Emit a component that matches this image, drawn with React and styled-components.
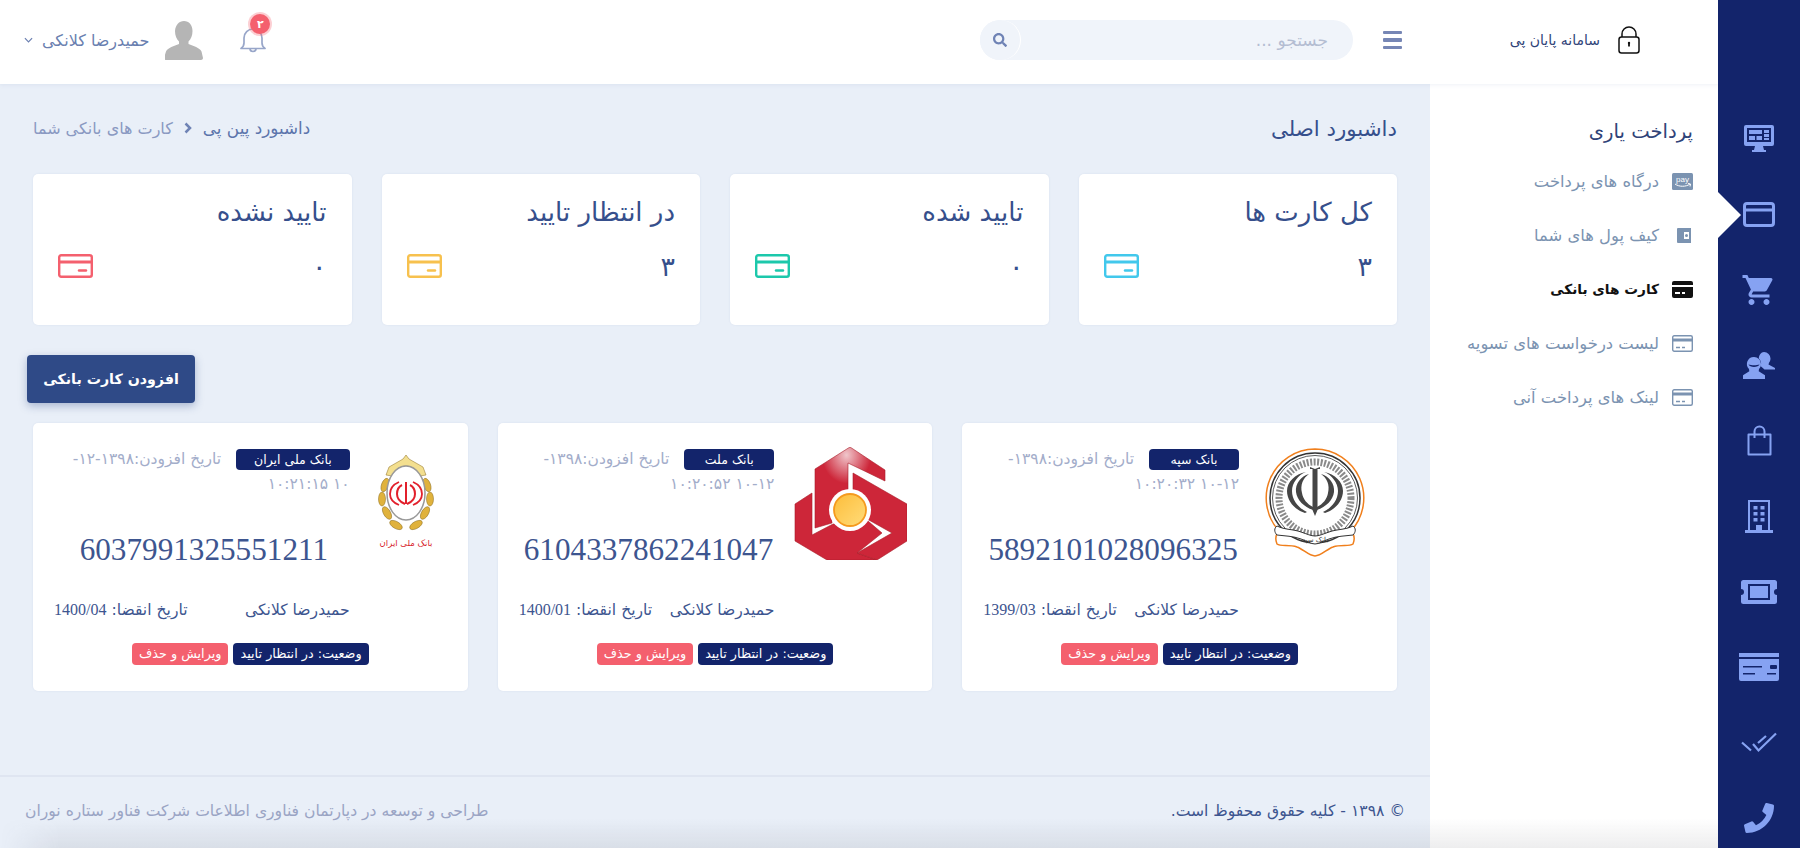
import React from "react";
import styled, { createGlobalStyle } from "styled-components";
import { FaPhoneAlt, FaSearch } from "react-icons/fa";
import { MdShoppingCart } from "react-icons/md";

const GlobalStyle = createGlobalStyle`
  * { box-sizing: border-box; }
  html, body { margin: 0; padding: 0; height: 100%; background: #e9eff8; }
  body { font-family: "DejaVu Sans", sans-serif; overflow: hidden; }
`;

const stats = [
  { title: "کل کارت ها", value: "۳", color: "#42c8ec" },
  { title: "تایید شده", value: "۰", color: "#1cc8ab" },
  { title: "در انتظار تایید", value: "۳", color: "#f7c14e" },
  { title: "تایید نشده", value: "۰", color: "#f4606e" },
];

// the zero width spaces let the date wrap after a hyphen, as in the reference
const banks = [
  { name: "بانک سپه", date: "۱۳۹۸-\u200b۱۲-۱۰ ۱۰:۲۰:۳۲", number: "5892101028096325", expiry: "1399/03", logo: "sepah", logoWidth: 137 },
  { name: "بانک ملت", date: "۱۳۹۸-\u200b۱۲-۱۰ ۱۰:۲۰:۵۲", number: "6104337862241047", expiry: "1400/01", logo: "mellat", logoWidth: 137 },
  { name: "بانک ملی ایران", date: "۱۳۹۸-۱۲-\u200b۱۰ ۱۰:۲۱:۱۵", number: "6037991325551211", expiry: "1400/04", logo: "melli", logoWidth: 97 },
];

const menu = [
  { label: "درگاه های پرداخت", icon: "pay" },
  { label: "کیف پول های شما", icon: "wallet" },
  { label: "کارت های بانکی", icon: "bank", active: true },
  { label: "لیست درخواست های تسویه", icon: "list" },
  { label: "لینک های پرداخت آنی", icon: "list" },
];

/* rail icons */
const MonitorIcon = () => (
  <svg width="30" height="27" viewBox="0 0 30 27" fill="currentColor">
    <path fillRule="evenodd" d="M2 0h26a2 2 0 0 1 2 2v17a2 2 0 0 1-2 2H19l1 4h2v2H8v-2h2l1-4H2a2 2 0 0 1-2-2V2a2 2 0 0 1 2-2zm1 3v14h24V3H3z" />
    <path d="M5 5h13v4H5zM20 5h5v3h-5zM20 9h5v3h-5zM5 11h6v4H5zM12.500 11h5.500v4h-5.500zM20 13h5v2h-5z" />
  </svg>
);
const CardOutlineIcon = () => (
  <svg width="32" height="25" viewBox="0 0 32 25" fill="none" stroke="currentColor" strokeWidth="3">
    <rect x="1.500" y="1.500" width="29" height="22" rx="2.500" />
    <path d="M1 8h30" strokeWidth="3" />
  </svg>
);
const PeopleIcon = () => (
  <svg width="32" height="27" viewBox="0 0 32 27" fill="currentColor">
    <path d="M21 0a6.500 6.500 0 0 1 6.500 6.500c0 1.500-.5 3-1.500 4.200l-.5 1.800 6.500 3.500v1.500H21.500l-4-3.500c.3-.8.6-1.600.6-2.500 0-2-1-3.700-2.300-4.900C16 3 18 0 21 0z" />
    <path fillRule="evenodd" d="M11 5a7 7 0 0 1 7 7c0 2-.7 3.700-2 5l-.3 2.200 6.300 4V27H0v-3.800l6.300-4L6 17a7 7 0 0 1 5-12zM5.500 12.500c1 3.200 10 3.200 11 0-3 1-8 1-11 0z" />
  </svg>
);
const BagIcon = () => (
  <svg width="25" height="31" viewBox="0 0 25 31" fill="none" stroke="currentColor" strokeWidth="2">
    <path d="M1.500 9.500h22V29.500h-22z" strokeLinejoin="round" />
    <path d="M7.500 13V6.500a5 5 0 0 1 10 0V13" />
  </svg>
);
const BuildingIcon = () => (
  <svg width="28" height="33" viewBox="0 0 28 33" fill="currentColor">
    <path fillRule="evenodd" d="M3 0h22v30h3v3H0v-3h3V0zm2 2v28h6v-5h6v5h6V2H5z" />
    <path d="M8.500 6h4v3.500h-4zM15.500 6h4v3.500h-4zM8.500 12h4v3.500h-4zM15.500 12h4v3.500h-4zM8.500 18h4v3.500h-4zM15.500 18h4v3.500h-4z" />
  </svg>
);
const TicketIcon = () => (
  <svg width="36" height="24" viewBox="0 0 36 24" fill="currentColor">
    <path fillRule="evenodd" d="M2.500 0h31A2.500 2.500 0 0 1 36 2.500V9a3 3 0 0 0 0 6v6.500a2.500 2.500 0 0 1-2.500 2.500h-31A2.500 2.500 0 0 1 0 21.500V15a3 3 0 0 0 0-6V2.500A2.500 2.500 0 0 1 2.500 0zM7 4v16h22V4H7z" />
    <path d="M9 6h18v12H9z" />
  </svg>
);
const CardFilledIcon = () => (
  <svg width="40" height="28" viewBox="0 0 40 28" fill="currentColor">
    <path d="M0 0h40v4H0z" />
    <path fillRule="evenodd" d="M0 6h40v20a2 2 0 0 1-2 2H2a2 2 0 0 1-2-2V6zm4 7v1.500h19V13H4zm0 7v1.500h12V20H4zm28-8a1 1 0 0 0-1 1v2a1 1 0 0 0 1 1h5a1 1 0 0 0 1-1v-2a1 1 0 0 0-1-1h-5zm-4 8v1.500h9V20h-9z" />
  </svg>
);
const CheckIcon = () => (
  <svg width="36" height="21" viewBox="0 0 36 21" fill="none" stroke="currentColor" strokeWidth="2.200">
    <path d="M1 10.500l9 8M12 12l5.500 6.500L35 1.500M17 11l8-7" />
  </svg>
);
const PhoneIcon = styled(FaPhoneAlt)`
  transform: scaleX(-1);
`;

const railIcons = [
  { El: MonitorIcon },
  { El: CardOutlineIcon, active: true },
  { El: () => <MdShoppingCart size={36} /> },
  { El: PeopleIcon },
  { El: BagIcon },
  { El: BuildingIcon },
  { El: TicketIcon },
  { El: CardFilledIcon },
  { El: CheckIcon },
  { El: () => <PhoneIcon size={30} /> },
];

const StatCardIcon = ({ color }) => (
  <svg width="35" height="24" viewBox="0 0 35 24" fill="none" stroke={color} strokeWidth="2.400">
    <rect x="1.200" y="1.200" width="32.600" height="21.600" rx="2" />
    <path d="M1 8h33" strokeWidth="3" />
    <path d="M21 16.500h7" strokeLinecap="round" />
  </svg>
);

const MenuIcon = ({ type }) => {
  if (type === "pay")
    return (
      <svg width="21" height="17" viewBox="0 0 21 17">
        <rect width="21" height="17" rx="1.500" fill="currentColor" />
        <path d="M3 11c4 3 11 3 15 0M16 10.500l2.500.5-.5 2.500" fill="none" stroke="#fff" strokeWidth="1" />
        <text x="10.500" y="8.500" fontSize="8" fill="#fff" textAnchor="middle" fontFamily="Liberation Sans">pay</text>
      </svg>
    );
  if (type === "wallet")
    return (
      <svg width="21" height="15" viewBox="0 0 21 15" fill="currentColor">
        <path fillRule="evenodd" d="M6 0h13v15H6a1 1 0 0 1-1-1V1a1 1 0 0 1 1-1zm6 4v7h5V4h-5zm2.500 2a1.500 1.500 0 1 1 0 3 1.500 1.500 0 0 1 0-3z" />
      </svg>
    );
  if (type === "bank")
    return (
      <svg width="21" height="17" viewBox="0 0 21 17" fill="currentColor">
        <path fillRule="evenodd" d="M2 0h17a2 2 0 0 1 2 2v2H0V2a2 2 0 0 1 2-2zM0 6h21v9a2 2 0 0 1-2 2H2a2 2 0 0 1-2-2V6zm3 5v2h5v-2H3zm7 0v2h3v-2h-3z" />
      </svg>
    );
  return (
    <svg width="21" height="17" viewBox="0 0 21 17" fill="none" stroke="currentColor">
      <rect x=".700" y=".700" width="19.600" height="15.600" rx="1.500" strokeWidth="1.400" />
      <path d="M1 5h19" strokeWidth="3" />
      <path d="M4 12.500h4M10 12.500h3" strokeWidth="1.600" />
    </svg>
  );
};

const LockIcon = () => (
  <svg width="22" height="28" viewBox="0 0 22 28" fill="none" stroke="#111" strokeWidth="1.500">
    <rect x="1" y="11" width="20" height="16" rx="2.500" />
    <path d="M4 11V8a7 7 0 0 1 14 0v3" />
    <path d="M11 16.500v4" strokeWidth="1.800" />
    <circle cx="11" cy="17" r="1.200" fill="#111" stroke="none" />
  </svg>
);

const BellIcon = () => (
  <svg width="26" height="26" viewBox="0 0 26 26" fill="none" stroke="#98a6c9" strokeWidth="1.700">
    <path d="M1 21.500c2-1.500 3-3 3-5.500v-5a9 9 0 0 1 18 0v5c0 2.500 1 4 3 5.500H1z" strokeLinejoin="round" />
    <path d="M10 21.500a3 3 0 0 0 6 0" />
  </svg>
);

const AvatarIcon = () => (
  <svg width="38" height="39" viewBox="0 0 38 39" fill="#b5b5b5">
    <path d="M19 0c5 0 8.500 4 8.500 10 0 4.500-1.500 8-4 10.500v2.500c5 2 11 3.500 13 7.500l1.500 6.500c0 1-1 2-2 2H1c-1 0-2-1-2-2l2-6.500c2-4 8-5.500 13-7.500v-2.500c-2.500-2.500-4-6-4-10.500C10.500 4 14 0 19 0z" />
  </svg>
);

const SepahLogo = () => (
  <svg width="100" height="112" viewBox="0 0 100 112">
    <path d="M50 1a49 49 0 0 1 36 82c3 3 4 8 2 13-4 3-12 0-20 3-6 2-12 9-18 9s-12-7-18-9c-8-3-16 0-20-3-2-5-1-10 2-13A49 49 0 0 1 50 1z" fill="#fff" stroke="#f07f1c" strokeWidth="1.500" />
    <circle cx="50" cy="50" r="45" fill="#fff" stroke="#333" strokeWidth="1.500" />
    <circle cx="50" cy="50" r="42.500" fill="none" stroke="#333" strokeWidth=".800" />
    <circle cx="50" cy="50" r="36" fill="none" stroke="#8a8a8a" strokeWidth="7" strokeDasharray="2 1.500" />
    <circle cx="50" cy="50" r="31" fill="#fff" />
    <g fill="#454545">
      <path d="M47.500 21h5v41l-2.500 6-2.500-6z" />
      <path d="M44 26c-6 4-9 11-7 19 1 6 5 11 11 14v3c-9-3-16-10-17-18-1-8 5-16 13-18z" />
      <path d="M56 26c6 4 9 11 7 19-1 6-5 11-11 14v3c9-3 16-10 17-18 1-8-5-16-13-18z" />
      <path d="M41 24c-8 3-14 11-14 19 0 10 8 18 15 21l-2 1c-10-3-18-12-18-22 0-9 8-17 19-19zM59 24c8 3 14 11 14 19 0 10-8 18-15 21l2 1c10-3 18-12 18-22 0-9-8-17-19-19z" />
      <path d="M45 19l5 2 5-2v2h-10z" />
    </g>
    <path d="M12 87c-3-3-3-7 0-9 8 4 16 3 24 6 6 2 10 4 14 4s8-2 14-4c8-3 16-2 24-6 3 2 3 6 0 9-8 1-16 1-24 4-6 2-10 5-14 5s-8-3-14-5c-8-3-16-3-24-4z" fill="#fff" stroke="#333" strokeWidth="1" />
    <text x="50" y="94" fontSize="7" fill="#333" textAnchor="middle">بانک سپه</text>
  </svg>
);

const MellatLogo = () => (
  <svg width="113" height="113" viewBox="0 0 113 113">
    <defs>
      <radialGradient id="mellatShine" cx="45%" cy="10%" r="35%">
        <stop offset="0" stopColor="#f0c6cb" />
        <stop offset="1" stopColor="#cd2639" />
      </radialGradient>
      <linearGradient id="mellatSun" x1="0" y1="0" x2="1" y2="1">
        <stop offset="0" stopColor="#fdbd3a" />
        <stop offset="1" stopColor="#ffdc7a" />
      </linearGradient>
    </defs>
    <g stroke="#a81c28" strokeWidth=".600">
      <path d="M56 0L91 23V34L54 16V46L38 62V76L21 81V22z" fill="url(#mellatShine)" />
      <path d="M18 46L1 57V94L33 113H83L63 106L88 86L74 74L39 77L18 88z" fill="#cd2639" />
      <path d="M59 26L113 57V94L83 113L63 106L98 86L73 72L59 47z" fill="#cd2639" />
    </g>
    <circle cx="56" cy="63" r="21" fill="#fff" />
    <circle cx="56" cy="63" r="16" fill="url(#mellatSun)" stroke="#f59a1e" strokeWidth="1.800" />
  </svg>
);

const MelliLogo = () => (
  <svg width="56" height="98" viewBox="0 0 56 98">
    <g fill="#e0b23c" stroke="#8a6a1c" strokeWidth=".500">
      <path d="M28 0l3 4 14 8 3 8-6 1C38 14 33 11 28 11s-10 3-14 10l-6-1 3-8 14-8z" fill="#f3df8f" />
      <ellipse cx="7" cy="30" rx="3.500" ry="7" transform="rotate(20 7 30)" />
      <ellipse cx="49" cy="30" rx="3.500" ry="7" transform="rotate(-20 49 30)" />
      <ellipse cx="4" cy="44" rx="3.500" ry="7" />
      <ellipse cx="52" cy="44" rx="3.500" ry="7" />
      <ellipse cx="9" cy="58" rx="3.500" ry="7" transform="rotate(-30 9 58)" />
      <ellipse cx="47" cy="58" rx="3.500" ry="7" transform="rotate(30 47 58)" />
      <ellipse cx="18" cy="70" rx="3.500" ry="7" transform="rotate(-60 18 70)" />
      <ellipse cx="38" cy="70" rx="3.500" ry="7" transform="rotate(60 38 70)" />
    </g>
    <ellipse cx="28" cy="38" rx="19" ry="27" fill="#fff" stroke="#999" strokeWidth="1.500" />
    <g fill="none" stroke="#e2202c" strokeWidth="2">
      <path d="M28 27v22" />
      <path d="M24 30c-4 2-5 6-5 9 0 4 3 8 8 10M32 30c4 2 5 6 5 9 0 4-3 8-8 10" />
      <path d="M21 27c-7 3-9 8-9 12 0 5 4 9 9 11M35 27c7 3 9 8 9 12 0 5-4 9-9 11" strokeWidth="1.800" />
    </g>
    <text x="28" y="91" fontSize="8.500" fill="#d8232c" textAnchor="middle">بانک ملی ایران</text>
  </svg>
);

const logos = { sepah: SepahLogo, mellat: MellatLogo, melli: MelliLogo };

export default function App() {
  return (
    <Shell dir="rtl">
      <GlobalStyle />
      <Rail>
        {railIcons.map(({ El, active }, i) => (
          <RailItem key={i} $active={active}>
            <El />
          </RailItem>
        ))}
      </Rail>

      <TopBar>
        <Brand>
          <LockIcon />
          <BrandName>سامانه پایان پی</BrandName>
        </Brand>
        <Burger>
          <span />
          <span />
          <span />
        </Burger>
        <SearchBox>
          <SearchField>جستجو ...</SearchField>
          <SearchButton>
            <FaSearch size={14} />
          </SearchButton>
        </SearchBox>
        <UserArea>
          <Bell>
            <BellIcon />
            <BellBadge>۲</BellBadge>
          </Bell>
          <AvatarIcon />
          <UserName>حمیدرضا کلانکی</UserName>
          <Caret viewBox="0 0 10 6" width="9" height="6">
            <path d="M1 1l4 4 4-4" fill="none" stroke="#6a7fb0" strokeWidth="1.300" />
          </Caret>
        </UserArea>
      </TopBar>

      <Sidebar>
        <SideTitle>پرداخت یاری</SideTitle>
        {menu.map((item) => (
          <SideItem key={item.label} $active={item.active}>
            <SideIcon>
              <MenuIcon type={item.icon} />
            </SideIcon>
            {item.label}
          </SideItem>
        ))}
      </Sidebar>

      <Main>
        <Content>
          <PageHead>
            <PageTitle>داشبورد اصلی</PageTitle>
            <Crumbs>
              <CrumbLink>داشبورد پین پی</CrumbLink>
              <CrumbArrow width="8" height="12" viewBox="0 0 8 12">
                <path d="M1.500 1.500L6 6l-4.500 4.500" fill="none" stroke="#6f83b5" strokeWidth="2.500" />
              </CrumbArrow>
              <CrumbCurrent>کارت های بانکی شما</CrumbCurrent>
            </Crumbs>
          </PageHead>

          <StatGrid>
            {stats.map((s) => (
              <StatCard key={s.title}>
                <StatTitle>{s.title}</StatTitle>
                <StatRow>
                  <StatValue>{s.value}</StatValue>
                  <StatCardIcon color={s.color} />
                </StatRow>
              </StatCard>
            ))}
          </StatGrid>

          <ActionRow>
            <AddButton>افزودن کارت بانکی</AddButton>
          </ActionRow>

          <BankGrid>
            {banks.map((b) => {
              const Logo = logos[b.logo];
              return (
                <BankCard key={b.number}>
                  <BankTop>
                    <LogoCol $width={b.logoWidth}>
                      <Logo />
                    </LogoCol>
                    <BankInfo>
                      <DateLine>
                        <BankBadge>{b.name}</BankBadge>
                        تاریخ افزودن:<DateDigits>{b.date}</DateDigits>
                      </DateLine>
                      <CardNumber>{b.number}</CardNumber>
                      <OwnerRow>
                        <span>حمیدرضا کلانکی</span>
                        <span>
                          تاریخ انقضا: <Expiry>{b.expiry}</Expiry>
                        </span>
                      </OwnerRow>
                    </BankInfo>
                  </BankTop>
                  <ActionsRow>
                    <StatusTag>وضعیت: در انتظار تایید</StatusTag>
                    <EditTag>ویرایش و حذف</EditTag>
                  </ActionsRow>
                </BankCard>
              );
            })}
          </BankGrid>
        </Content>

        <Footer>
          <Copyright>© ۱۳۹۸ - کلیه حقوق محفوظ است.</Copyright>
          <Credit>طراحی و توسعه در دپارتمان فناوری اطلاعات شرکت فناور ستاره نوران</Credit>
        </Footer>
      </Main>
      <BottomFade />
    </Shell>
  );
}

const Shell = styled.div`
  position: relative;
  display: grid;
  grid-template-columns: 82px 288px 1fr;
  grid-template-rows: 84px 1fr;
  width: 1800px;
  height: 848px;
  overflow: hidden;
  color: #364f8c;
`;

const Rail = styled.nav`
  grid-row: 1 / 3;
  position: relative;
  z-index: 3;
  display: flex;
  flex-direction: column;
  align-items: center;
  padding-top: 101px;
  background: #13246b;
  color: #86a2f2;
`;

const RailItem = styled.div`
  position: relative;
  flex: 0 0 75.500px;
  width: 100%;
  display: flex;
  align-items: center;
  justify-content: center;

  ${(p) =>
    p.$active &&
    `
    &::after {
      content: "";
      position: absolute;
      left: -1px;
      top: 14px;
      border-style: solid;
      border-width: 24px 0 24px 24px;
      border-color: transparent transparent transparent #fff;
    }
  `}
`;

const TopBar = styled.header`
  grid-column: 2 / 4;
  grid-row: 1;
  position: relative;
  z-index: 2;
  display: flex;
  align-items: center;
  padding-bottom: 4px;
  background: #fff;
  box-shadow: 0 1px 4px rgba(120, 140, 180, 0.12);
`;

const Brand = styled.div`
  flex: 0 0 288px;
  display: flex;
  align-items: center;
  gap: 18px;
  padding-right: 78px;
`;

const BrandName = styled.span`
  font-size: 14px;
  color: #2f4378;
`;

const Burger = styled.div`
  display: flex;
  flex-direction: column;
  gap: 4px;
  width: 19px;
  margin-right: 28px;

  span {
    height: 3.500px;
    background: #7686b5;
    border-radius: 1px;
  }
`;

const SearchBox = styled.div`
  display: flex;
  align-items: center;
  width: 373px;
  height: 40px;
  margin-right: 30px;
  border-radius: 20px;
  background: #f0f4fa;
`;

const SearchField = styled.div`
  flex: 1;
  padding-right: 25px;
  font-size: 17px;
  color: #b4bdd2;
`;

const SearchButton = styled.div`
  display: flex;
  align-items: center;
  justify-content: center;
  width: 41px;
  height: 40px;
  border-radius: 50%;
  border-right: 1px solid #fff;
  background: #f0f4fa;
  color: #6f83b5;
`;

const UserArea = styled.div`
  display: flex;
  align-items: center;
  margin-right: auto;
  padding-left: 24px;
`;

const Bell = styled.div`
  position: relative;
  display: flex;
  margin-left: 37px;
`;

const BellBadge = styled.span`
  position: absolute;
  top: -13px;
  right: -4px;
  display: flex;
  align-items: center;
  justify-content: center;
  width: 20px;
  height: 20px;
  border-radius: 50%;
  background: #f4606e;
  box-shadow: 0 0 0 2px rgba(244, 96, 110, 0.3);
  color: #fff;
  font-size: 11px;
  font-weight: 700;
`;

const UserName = styled.span`
  margin: 0 16px 0 9px;
  font-size: 16px;
  color: #6a7fb0;
`;

const Caret = styled.svg`
  display: block;
`;

const Sidebar = styled.aside`
  grid-row: 2;
  display: flex;
  flex-direction: column;
  padding: 31px 25px 0 0;
  background: #fff;
`;

const SideTitle = styled.h2`
  margin: 0 0 6px;
  height: 33px;
  font-size: 19.600px;
  font-weight: 400;
  line-height: 33px;
  color: #2f4378;
`;

const SideItem = styled.div`
  display: flex;
  align-items: center;
  gap: 13px;
  height: 54px;
  font-size: ${(p) => (p.$active ? "13.700px" : "16.400px")};
  font-weight: ${(p) => (p.$active ? 700 : 400)};
  color: ${(p) => (p.$active ? "#111" : "#7b93b1")};
`;

const SideIcon = styled.span`
  display: flex;
  justify-content: center;
  width: 21px;
`;

const Main = styled.main`
  grid-row: 2;
  display: flex;
  flex-direction: column;
  background: #e9eff8;
`;

const Content = styled.div`
  flex: 1;
  padding: 28px 33px 0;
`;

const PageHead = styled.div`
  display: flex;
  justify-content: space-between;
  align-items: center;
  height: 32px;
  margin-bottom: 30px;
`;

const PageTitle = styled.h1`
  margin: 0;
  font-size: 21.300px;
  font-weight: 400;
  color: #364f8c;
`;

const Crumbs = styled.div`
  display: flex;
  align-items: center;
  gap: 11px;
  font-size: 16px;
`;

const CrumbLink = styled.span`
  font-size: 16.800px;
  color: #5c75ac;
`;

/* the arrow points right in the reference, whatever the direction of the row */
const CrumbArrow = styled.svg`
  display: block;
`;

const CrumbCurrent = styled.span`
  color: #8a99c2;
`;

const StatGrid = styled.div`
  display: grid;
  grid-template-columns: repeat(4, 1fr);
  gap: 30px;
`;

const StatCard = styled.div`
  height: 151px;
  padding: 20px 25px;
  border-radius: 5px;
  background: #fff;
  box-shadow: 0 0 2px rgba(120, 140, 180, 0.15);
`;

const StatTitle = styled.div`
  height: 36px;
  font-size: 26px;
  line-height: 36px;
`;

const StatRow = styled.div`
  display: flex;
  align-items: center;
  justify-content: space-between;
  margin-top: 19px;
  height: 34px;
`;

const StatValue = styled.span`
  font-size: 27px;
`;

const ActionRow = styled.div`
  display: flex;
  justify-content: flex-end;
  margin: 30px 0 20px -6px;
`;

const AddButton = styled.button`
  width: 168px;
  height: 48px;
  border: 0;
  border-radius: 4px;
  background: #2f4a87;
  box-shadow: 0 3px 8px rgba(47, 74, 135, 0.35);
  color: #fff;
  font-family: inherit;
  font-size: 14.200px;
  font-weight: 700;
`;

const BankGrid = styled.div`
  display: grid;
  grid-template-columns: repeat(3, 1fr);
  gap: 30px;
`;

const BankCard = styled.div`
  height: 268px;
  padding: 24px 21px 0;
  border-radius: 5px;
  background: #fff;
  box-shadow: 0 0 2px rgba(120, 140, 180, 0.15);
`;

const BankTop = styled.div`
  display: flex;
  height: 196px;
`;

const LogoCol = styled.div`
  flex: 0 0 ${(p) => p.$width}px;
  display: flex;
  justify-content: center;
  align-items: center;
  height: 113px;
  padding-left: 15px;
`;

const BankInfo = styled.div`
  flex: 1;
  min-width: 0;
`;

const DateLine = styled.div`
  padding-left: 10px;
  font-size: 15.500px;
  letter-spacing: 0.4px;
  line-height: 25px;
  color: #a3adca;
`;

const DateDigits = styled.span`
  letter-spacing: 2px;
`;

const BankBadge = styled.span`
  display: inline-block;
  min-width: 90px;
  height: 21px;
  margin-left: 15px;
  padding: 0 18px;
  border-radius: 4px;
  background: #13246b;
  color: #fff;
  font-size: 12.500px;
  letter-spacing: 0;
  line-height: 21px;
  text-align: center;
`;

const CardNumber = styled.div`
  margin-top: 33px;
  padding-left: 4px;
  font-family: "Liberation Serif", serif;
  font-size: 31.200px;
  line-height: 40px;
  text-align: center;
  color: #3d558f;
`;

const OwnerRow = styled.div`
  display: flex;
  justify-content: space-between;
  margin-top: 28px;
  font-size: 15.600px;
  line-height: 24px;
  white-space: nowrap;
  color: #3d558f;
`;

const Expiry = styled.span`
  font-family: "Liberation Serif", serif;
  font-size: 16px;
`;

const ActionsRow = styled.div`
  display: flex;
  justify-content: center;
  gap: 5px;
`;

const StatusTag = styled.span`
  padding: 0 7px;
  height: 22px;
  border-radius: 4px;
  background: #13246b;
  color: #fff;
  font-size: 12.800px;
  line-height: 22px;
`;

const EditTag = styled(StatusTag)`
  background: #f4606e;
`;

const Footer = styled.footer`
  display: flex;
  justify-content: space-between;
  align-items: center;
  height: 73px;
  padding: 0 25px 4px;
  border-top: 2px solid #dfe5f1;
  font-size: 15.600px;
`;

const Copyright = styled.span`
  color: #3d558f;
`;

const Credit = styled.span`
  color: #9aa4c4;
`;

const BottomFade = styled.div`
  position: absolute;
  left: 0;
  right: 82px;
  bottom: 0;
  height: 30px;
  background: linear-gradient(rgba(60, 60, 70, 0), rgba(60, 60, 70, 0.09));
  mask-image: linear-gradient(to right, transparent, #000 60px);
  pointer-events: none;
  z-index: 2;
`;
